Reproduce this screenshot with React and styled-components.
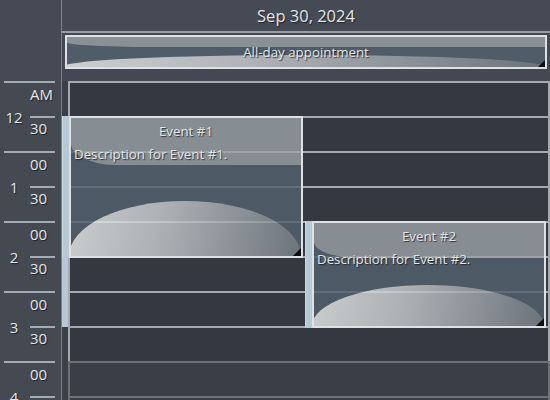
import React from 'react';
import styled, { createGlobalStyle } from 'styled-components';

const SLOT = 35;
const COL_WIDTH = 243;

const GlobalStyle = createGlobalStyle`
  html, body {
    margin: 0;
    padding: 0;
    background: #353840;
  }
  * {
    box-sizing: border-box;
  }
`;

const Scheduler = styled.div`
  width: 550px;
  height: 400px;
  overflow: hidden;
  display: flex;
  flex-direction: column;
  background: #454952;
  font-family: "Open Sans", "Noto Sans", sans-serif;
  color: #e2e6e9;
  text-shadow: 1px 1px 1px rgba(20, 22, 26, 0.75);
`;

const TopRow = styled.div`
  display: flex;
  height: ${props => props.height}px;
  flex-shrink: 0;
`;

const Corner = styled.div`
  width: 62px;
  flex-shrink: 0;
  border-right: 1px solid #7d828a;
  background: #464a54;
`;

const DayHeader = styled.div`
  flex: 1;
  display: flex;
  align-items: center;
  justify-content: center;
  background: #464a54;
  border-bottom: 2px solid #9a9ea5;
  font-size: 16.5px;
  padding-bottom: 1px;
`;

const AllDayArea = styled.div`
  flex: 1;
  padding: 2px 3px 12px 3px;
  background: #444852;
`;

const Glass = styled.div`
  position: absolute;
  inset: 0;
  overflow: hidden;
  opacity: 0.82;
  background: #53616e;

  &::before {
    content: '';
    position: absolute;
    top: 0;
    left: 0;
    right: 0;
    height: 34%;
    background: #9aa1a6;
    border-bottom-left-radius: 20% 45%;
  }

  &::after {
    content: '';
    position: absolute;
    left: -1%;
    width: 101%;
    height: 80%;
    bottom: -40%;
    border-radius: 50%;
    background: linear-gradient(100deg, #eceeef 0%, #c6cacd 40%, #8f979e 80%, #737c84 100%);
  }
`;

const Grip = styled.div`
  position: absolute;
  right: 0;
  bottom: 0;
  width: 0;
  height: 0;
  border-left: ${props => props.size}px solid transparent;
  border-bottom: ${props => props.size}px solid #0d0e10;
`;

const AppBox = styled.div`
  position: relative;
  flex: 1;
  height: 100%;
  border: 2px solid #dde1e5;
`;

const AllDayText = styled.div`
  position: relative;
  height: 100%;
  display: flex;
  align-items: center;
  justify-content: center;
  font-size: 13.3px;
`;

const Body = styled.div`
  flex: 1;
  display: flex;
  min-height: 0;
`;

const Ruler = styled.div`
  width: 62px;
  flex-shrink: 0;
  padding: 0 6px 0 4px;
  border-right: 1px solid #7d828a;
  background: #454952;
`;

const HourBlock = styled.div`
  height: ${SLOT * 2}px;
  display: grid;
  grid-template-columns: 20px 1fr;
  border-top: 2px solid #a2acb4;
`;

const HourLabel = styled.div`
  display: flex;
  align-items: center;
  justify-content: center;
  font-size: 15px;
  margin-top: 0;
`;

const Minutes = styled.div`
  display: flex;
  flex-direction: column;
`;

const Half = styled.div`
  height: ${props => (props.$second ? SLOT : SLOT - 2)}px;
  margin-left: 6px;
  padding-top: ${props => (props.$second ? 0 : 1)}px;
  border-top: ${props => (props.$second ? '2px solid #a2acb4' : 'none')};
  font-size: 15px;
  line-height: 20px;
`;

const DayColumn = styled.div`
  position: relative;
  flex: 1;
  display: flex;
`;

const StatusStrip = styled.div`
  position: relative;
  width: 6px;
  flex-shrink: 0;
  background: #3b3f48;
`;

const Busy = styled.div`
  position: absolute;
  left: 0;
  right: 0;
  background: #b5c8d4;
`;

const Cells = styled.div`
  flex: 1;
  display: flex;
  flex-direction: column;
`;

const Cell = styled.div`
  height: ${SLOT}px;
  flex-shrink: 0;
  background: ${props => (props.$muted ? '#3b3e47' : '#353840')};
  border-top: 2px solid ${props => (props.$muted ? '#6d7178' : '#a6aab0')};
  border-left: 2px solid ${props => (props.$muted ? '#6d7178' : '#a6aab0')};
  border-right: 2px solid ${props => (props.$muted ? '#6d7178' : '#a6aab0')};
`;

const Appointment = styled.div`
  position: absolute;
  display: flex;
`;

const AppStrip = styled.div`
  width: 7px;
  flex-shrink: 0;
  background: #b5c8d4;
  border-left: 1px solid #c9d8e0;
`;

const AppContent = styled.div`
  position: relative;
  padding: 3px 3px;
  font-size: 13.3px;
  line-height: 20px;
`;

const Title = styled.div`
  text-align: center;
`;

const Description = styled.div`
  margin-top: 3px;
  white-space: nowrap;
`;

const hours = [
  { label: '12', first: 'AM' },
  { label: '1', first: '00' },
  { label: '2', first: '00' },
  { label: '3', first: '00' },
  { label: '4', first: '00' },
];

const slots = Array.from({ length: 10 }, (_, i) => i);

const events = [
  { id: 1, title: 'Event #1', description: 'Description for Event #1.', start: 1, span: 4, col: 0 },
  { id: 2, title: 'Event #2', description: 'Description for Event #2.', start: 4, span: 3, col: 1 },
];

const busyStart = Math.min(...events.map(e => e.start));
const busyEnd = Math.max(...events.map(e => e.start + e.span));

export default function App() {
  return (
    <Scheduler>
      <GlobalStyle />
      <TopRow height={33}>
        <Corner />
        <DayHeader>Sep 30, 2024</DayHeader>
      </TopRow>
      <TopRow height={48}>
        <Corner />
        <AllDayArea>
          <AppBox>
            <Glass />
            <AllDayText>All-day appointment</AllDayText>
            <Grip size={7} />
          </AppBox>
        </AllDayArea>
      </TopRow>
      <Body>
        <Ruler>
          {hours.map(h => (
            <HourBlock key={h.label}>
              <HourLabel>{h.label}</HourLabel>
              <Minutes>
                <Half>{h.first}</Half>
                <Half $second>30</Half>
              </Minutes>
            </HourBlock>
          ))}
        </Ruler>
        <DayColumn>
          <StatusStrip>
            <Busy style={{ top: busyStart * SLOT, height: (busyEnd - busyStart) * SLOT + 1 }} />
          </StatusStrip>
          <Cells>
            {slots.map(i => (
              <Cell key={i} $muted={i >= 8} />
            ))}
          </Cells>
          {events.map(ev => (
            <Appointment
              key={ev.id}
              style={{
                top: ev.start * SLOT,
                height: ev.span * SLOT + 2,
                left: ev.col * COL_WIDTH,
                width: COL_WIDTH - 2,
              }}
            >
              <AppStrip />
              <AppBox>
                <Glass />
                <AppContent>
                  <Title>{ev.title}</Title>
                  <Description>{ev.description}</Description>
                </AppContent>
                <Grip size={8} />
              </AppBox>
            </Appointment>
          ))}
        </DayColumn>
      </Body>
    </Scheduler>
  );
}
